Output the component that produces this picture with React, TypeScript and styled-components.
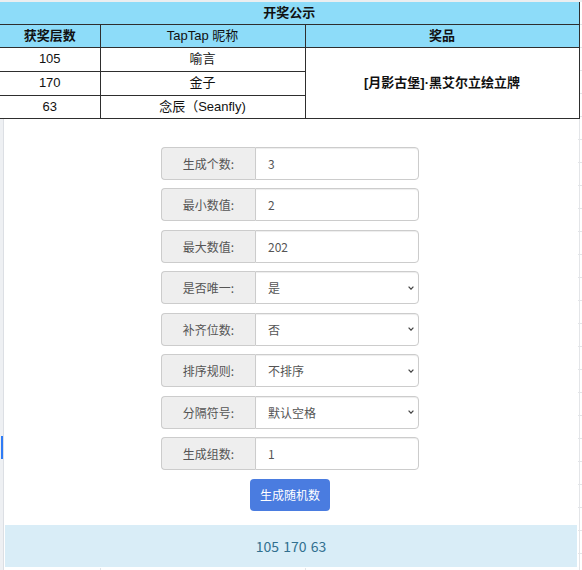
import React from "react";
import styled, { createGlobalStyle } from "styled-components";

const GlobalStyle = createGlobalStyle`
  html, body {
    margin: 0;
    padding: 0;
    background: #ffffff;
  }
  * {
    box-sizing: border-box;
  }
`;

/* Spreadsheet-like sheet: faint cell grid and a narrow row-header strip on the left */
const Sheet = styled.div`
  position: relative;
  width: 582px;
  height: 570px;
  overflow: hidden;
  padding-top: 2px;
  background-color: #ffffff;
  background-image:
    linear-gradient(to right, #eef0f3 0 3px, #dcdfe4 3px 4px, transparent 4px),
    linear-gradient(
      to right,
      transparent 0 100px,
      #e3e5e8 100px 101px,
      transparent 101px 305px,
      #e3e5e8 305px 306px,
      transparent 306px 579px,
      #e3e5e8 579px 580px,
      transparent 580px
    ),
    repeating-linear-gradient(
      to bottom,
      transparent 0 1px,
      #e3e5e8 1px 2px,
      transparent 2px 23px
    );
`;

const TopEdge = styled.div`
  position: absolute;
  left: 0;
  top: 0;
  width: 100%;
  height: 2px;
  background: #eceef0;
`;

const ActiveRowMark = styled.span`
  position: absolute;
  left: 1px;
  top: 436px;
  width: 2px;
  height: 23px;
  background: #2f7bf5;
`;

const PrizeTable = styled.table`
  position: relative;
  width: 579px;
  border-collapse: collapse;
  table-layout: fixed;
  font-family: "Liberation Sans", "Noto Sans CJK SC", sans-serif;
  font-size: 13px;
  color: #111;
`;

const Row = styled.tr<{ $h: number }>`
  height: ${(p) => p.$h}px;
`;

const Cell = styled.td<{ $head?: boolean; $bold?: boolean }>`
  padding: 0;
  text-align: center;
  vertical-align: middle;
  line-height: 16px;
  background: ${(p) => (p.$head ? "#8ddcf9" : "#ffffff")};
  font-weight: ${(p) => (p.$bold ? 700 : 400)};
  border: 1px solid #2e2e2e;
  border-top: 0;
  &:first-child {
    border-left: 0;
  }
`;

const Panel = styled.div`
  position: relative;
  margin-left: 4px;
  width: 574px;
  height: 449px;
  background: #ffffff;
  padding: 28px 1px 0 1px;
  display: flex;
  flex-direction: column;
  align-items: center;
  font-family: "Noto Sans CJK SC", sans-serif;
  font-size: 12px;
  color: #555555;
`;

const Form = styled.div`
  display: flex;
  flex-direction: column;
  align-items: center;
  gap: 8.5px;
`;

const InputGroup = styled.div`
  display: flex;
  width: 258px;
  height: 33px;
  margin-left: -2px;
`;

const Addon = styled.label`
  width: 94px;
  flex: none;
  display: flex;
  align-items: center;
  justify-content: center;
  background: #eeeeee;
  border: 1px solid #cccccc;
  border-right: 0;
  border-radius: 4px 0 0 4px;
  color: #555555;
  font-size: 12px;
`;

const TextInput = styled.input`
  flex: 1;
  min-width: 0;
  height: 100%;
  margin: 0;
  padding: 0 12px;
  border: 1px solid #cccccc;
  border-radius: 0 4px 4px 0;
  box-shadow: inset 0 1px 1px rgba(0, 0, 0, 0.075);
  background: #ffffff;
  font-family: "Noto Sans CJK SC", sans-serif;
  font-size: 12px;
  color: #555555;
  outline: none;
`;

const SelectWrap = styled.div`
  position: relative;
  flex: 1;
  min-width: 0;
  height: 100%;
`;

const Select = styled.select`
  appearance: none;
  -webkit-appearance: none;
  width: 100%;
  height: 100%;
  margin: 0;
  padding: 0 20px 0 12px;
  border: 1px solid #cccccc;
  border-radius: 0 4px 4px 0;
  box-shadow: inset 0 1px 1px rgba(0, 0, 0, 0.075);
  background: #ffffff;
  font-family: "Noto Sans CJK SC", sans-serif;
  font-size: 12px;
  color: #555555;
  outline: none;
`;

const Chevron = styled.svg`
  position: absolute;
  right: 5px;
  top: 50%;
  width: 6px;
  height: 4px;
  margin-top: -2px;
  pointer-events: none;
`;

const GenerateButton = styled.button`
  width: 80px;
  height: 32px;
  border: 0;
  border-radius: 4px;
  background: #4a7ce0;
  color: #ffffff;
  font-family: "Noto Sans CJK SC", sans-serif;
  font-size: 12px;
  padding: 0;
  margin-left: -2px;
  cursor: pointer;
`;

const Result = styled.div`
  margin-top: 14.5px;
  width: 100%;
  height: 42px;
  display: flex;
  align-items: center;
  justify-content: center;
  background: #d9edf7;
  color: #31708f;
  font-size: 14px;
  word-spacing: 1px;
`;

type Field =
  | { label: string; kind: "input"; value: string }
  | { label: string; kind: "select"; value: string; options: string[] };

const fields: Field[] = [
  { label: "生成个数:", kind: "input", value: "3" },
  { label: "最小数值:", kind: "input", value: "2" },
  { label: "最大数值:", kind: "input", value: "202" },
  { label: "是否唯一:", kind: "select", value: "是", options: ["是", "否"] },
  { label: "补齐位数:", kind: "select", value: "否", options: ["否", "是"] },
  { label: "排序规则:", kind: "select", value: "不排序", options: ["不排序", "从小到大", "从大到小"] },
  { label: "分隔符号:", kind: "select", value: "默认空格", options: ["默认空格", "逗号", "换行"] },
  { label: "生成组数:", kind: "input", value: "1" },
];

const winners = [
  { floor: "105", name: "喻言" },
  { floor: "170", name: "金子" },
  { floor: "63", name: "念辰（Seanfly)" },
];

export default function App() {
  return (
    <>
      <GlobalStyle />
      <Sheet>
        <TopEdge />
        <ActiveRowMark />
        <PrizeTable>
          <colgroup>
            <col style={{ width: 100 }} />
            <col style={{ width: 205 }} />
            <col style={{ width: 274 }} />
          </colgroup>
          <tbody>
            <Row $h={22}>
              <Cell $head $bold colSpan={3}>
                开奖公示
              </Cell>
            </Row>
            <Row $h={23}>
              <Cell $head $bold>
                获奖层数
              </Cell>
              <Cell $head>TapTap 昵称</Cell>
              <Cell $head $bold>
                奖品
              </Cell>
            </Row>
            {winners.map((w, i) => (
              <Row $h={i === 2 ? 23 : 24} key={w.floor}>
                <Cell>{w.floor}</Cell>
                <Cell>{w.name}</Cell>
                {i === 0 && (
                  <Cell $bold rowSpan={3}>
                    [月影古堡]·黑艾尔立绘立牌
                  </Cell>
                )}
              </Row>
            ))}
          </tbody>
        </PrizeTable>
        <Panel>
          <Form>
            {fields.map((f) => (
              <InputGroup key={f.label}>
                <Addon>{f.label}</Addon>
                {f.kind === "input" ? (
                  <TextInput defaultValue={f.value} />
                ) : (
                  <SelectWrap>
                    <Select defaultValue={f.value}>
                      {f.options.map((o) => (
                        <option key={o} value={o}>
                          {o}
                        </option>
                      ))}
                    </Select>
                    <Chevron viewBox="0 0 6 4">
                      <path d="M0.6 0.6 L3 3.2 L5.4 0.6" fill="none" stroke="#444" strokeWidth="1.2" />
                    </Chevron>
                  </SelectWrap>
                )}
              </InputGroup>
            ))}
            <GenerateButton>生成随机数</GenerateButton>
          </Form>
          <Result>105 170 63</Result>
        </Panel>
      </Sheet>
    </>
  );
}
